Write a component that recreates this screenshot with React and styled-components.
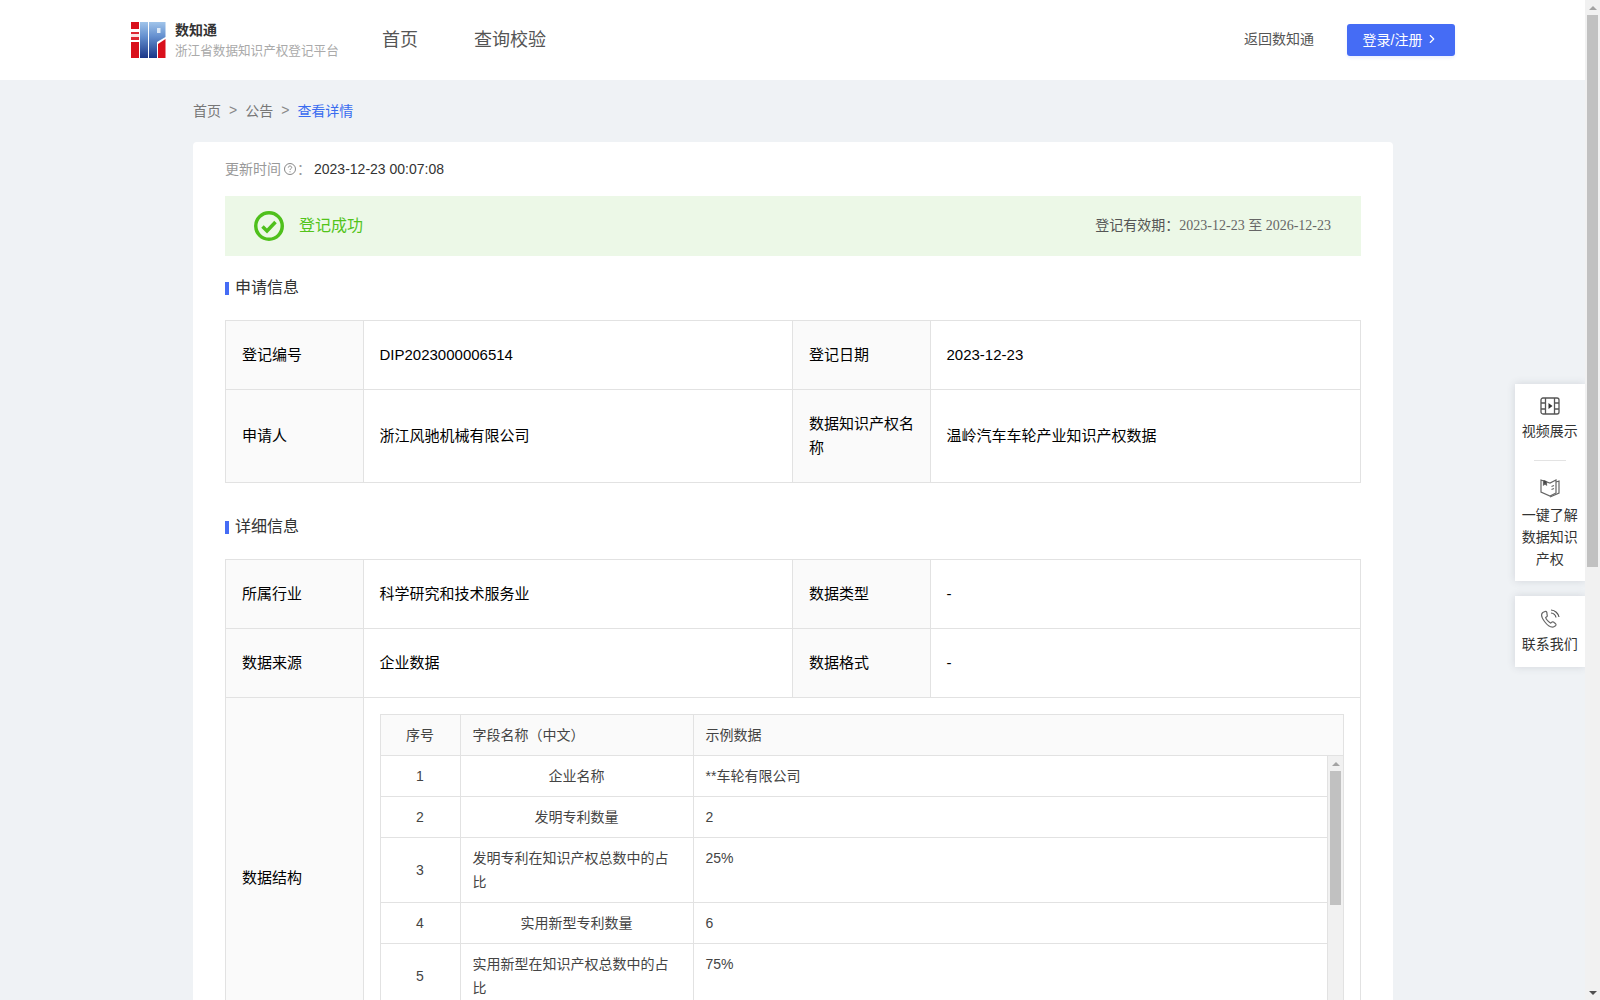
import React from 'react';
import styled, { createGlobalStyle } from 'styled-components';
import { ChevronRight } from 'lucide-react';

const FONT = '"Liberation Sans", "Noto Sans CJK SC", sans-serif';

const GlobalStyle = createGlobalStyle`
  html, body {
    margin: 0;
    height: 100%;
    overflow: hidden;
    background: #eff2f5;
    font-family: ${FONT};
  }
  * { box-sizing: border-box; }
`;

const Shell = styled.div`
  display: flex;
  height: 100vh;
  overflow: hidden;
`;

const Page = styled.div`
  flex: 1;
  min-width: 0;
  height: 100%;
  overflow: hidden;
  position: relative;
`;

const Track = styled.div`
  flex: none;
  display: flex;
  flex-direction: column;
  align-items: center;
  width: ${props => props.$width}px;
  height: ${props => props.$height || '100%'};
  background: #f1f1f1;
`;

const ArrowBox = styled.div`
  flex: none;
  height: 15px;
  width: 100%;
  display: flex;
  align-items: center;
  justify-content: center;
`;

const Arrow = styled.span`
  width: 0;
  height: 0;
  border-left: 4px solid transparent;
  border-right: 4px solid transparent;
  border-${props => (props.$down ? 'top' : 'bottom')}: 4px solid ${props => (props.$down ? '#505050' : '#a3a3a3')};
`;

const Thumb = styled.div`
  flex: none;
  width: 11px;
  height: ${props => props.$height}px;
  background: #c1c1c1;
`;

const Spacer = styled.div`
  flex: 1;
`;

const Header = styled.header`
  height: 80px;
  background: #fff;
  display: flex;
  align-items: center;
  padding: 0 130px 0 131px;
`;

const LogoWrap = styled.div`
  display: flex;
  align-items: center;
  width: 251px;
`;

const LogoText = styled.div`
  margin-left: 9px;
`;

const LogoTitle = styled.div`
  font-size: 14px;
  font-weight: 700;
  line-height: 18px;
  margin-bottom: 3px;
  color: #333;
`;

const LogoSub = styled.div`
  font-size: 12.6px;
  line-height: 18px;
  color: #aaa;
  white-space: nowrap;
`;

const Nav = styled.nav`
  display: flex;
  gap: 56px;
  padding-bottom: 4px;
`;

const NavItem = styled.a`
  font-size: 18px;
  color: #555;
`;

const HeaderRight = styled.div`
  margin-left: auto;
  display: flex;
  align-items: center;
  gap: 33px;
`;

const BackLink = styled.a`
  font-size: 14px;
  color: #555;
  margin-bottom: 4px;
`;

const LoginButton = styled.button`
  width: 108px;
  height: 32px;
  border: none;
  border-radius: 3px;
  background: #456cf5;
  color: #fff;
  font-family: ${FONT};
  font-size: 14px;
  display: flex;
  align-items: center;
  justify-content: center;
  gap: 3px;
  padding: 0 0 3px;
  box-shadow: 0 2px 3px rgba(69, 108, 245, 0.1);
`;

const Main = styled.main`
  width: 1200px;
  margin-left: 193px;
`;

const Breadcrumb = styled.div`
  height: 62px;
  display: flex;
  align-items: center;
  padding-bottom: 3px;
  font-size: 14px;
  color: #777;
`;

const CrumbSep = styled.span`
  margin: 0 8px;
  color: #888;
`;

const CrumbActive = styled.span`
  color: #3a6cf0;
`;

const Card = styled.section`
  background: #fff;
  border-radius: 4px 4px 0 0;
  padding: 0 32px 32px;
`;

const UpdateLine = styled.div`
  height: 54px;
  display: flex;
  align-items: center;
  padding-bottom: 2px;
  font-size: 14px;
  color: #999;
`;

const UpdateValue = styled.span`
  margin: 2px 0 0 3px;
  color: #333;
`;

const HelpIcon = styled.svg`
  margin: 2px 0 0 2px;
`;

const Banner = styled.div`
  height: 60px;
  background: #ecf8e7;
  display: flex;
  align-items: center;
  padding: 0 30px 0 29px;
`;

const BannerTitle = styled.span`
  margin: 0 0 4px 15px;
  font-size: 16px;
  color: #52c41a;
`;

const Validity = styled.span`
  margin: 0 0 4px auto;
  font-size: 14px;
  color: #555;
`;

const SerifDate = styled.span`
  font-family: "Liberation Serif", "Noto Sans CJK SC", serif;
  color: #666;
`;

const SectionTitle = styled.h3`
  margin: 0;
  height: ${props => props.$height}px;
  padding-top: ${props => props.$top}px;
  display: flex;
  align-items: flex-start;
  font-size: 16px;
  font-weight: 400;
  line-height: 22px;
  color: #333;
  &::before {
    content: '';
    width: 4px;
    height: 13px;
    margin: 5px 6px 0 0;
    background: #456cf5;
  }
`;

const InfoTable = styled.table`
  width: 1135px;
  border-collapse: collapse;
  table-layout: fixed;
  font-size: 15px;
  color: #000;
`;

const Label = styled.td`
  height: ${props => props.$height}px;
  padding: 0 16px;
  line-height: 24px;
  background: #fafafa;
  border: 1px solid #e2e2e2;
`;

const Value = styled.td`
  height: ${props => props.$height}px;
  padding: 0 16px 0 15.5px;
  line-height: 24px;
  background: #fff;
  border: 1px solid #e2e2e2;
`;

const StructureCell = styled.td`
  padding: 16px;
  vertical-align: top;
  border: 1px solid #e2e2e2;
`;

const StructureBox = styled.div`
  width: 964px;
  border: 1px solid #e2e2e2;
  border-bottom: none;
  font-size: 14px;
  color: #444;
`;

const GridRow = styled.div`
  display: grid;
  grid-template-columns: 80px 233px 1fr;
  background: ${props => (props.$head ? '#fafafa' : '#fff')};
  border-bottom: 1px solid #e2e2e2;
`;

const GridCell = styled.div`
  min-height: ${props => props.$height}px;
  padding: ${props => (props.$top ? '8px 12px 8px 11.5px' : '0 12.5px 0 11.5px')};
  display: flex;
  align-items: ${props => (props.$top ? 'flex-start' : 'center')};
  justify-content: ${props => (props.$center ? 'center' : 'flex-start')};
  text-align: ${props => (props.$center ? 'center' : 'left')};
  line-height: 24px;
  border-right: ${props => (props.$last ? 'none' : '1px solid #e2e2e2')};
`;

const StructureBody = styled.div`
  display: flex;
  align-items: flex-start;
`;

const RowsColumn = styled.div`
  flex: 1;
  min-width: 0;
`;

const InnerTrack = styled(Track)`
  border-left: 1px solid #e2e2e2;
  height: 260px;
`;

const SideDock = styled.aside`
  position: absolute;
  top: 384px;
  right: 0;
  width: 70px;
  display: flex;
  flex-direction: column;
  gap: 15px;
`;

const DockPanel = styled.div`
  background: #fff;
  box-shadow: 0 0 8px rgba(60, 70, 90, 0.16);
  padding: ${props => props.$padding};
  display: flex;
  flex-direction: column;
  align-items: center;
`;

const DockItem = styled.div`
  width: 100%;
  display: flex;
  flex-direction: column;
  align-items: center;
  text-align: center;
  font-size: 14px;
  line-height: 22px;
  color: #333;
  padding: 0 7px 0 6.5px;
`;

const DockIcon = styled.svg`
  display: block;
  margin-bottom: ${props => props.$gap}px;
`;

const DockDivider = styled.div`
  width: 32px;
  height: 1px;
  background: #e3e3e3;
  margin: ${props => props.$margin};
`;

const LogoMark = () => (
  <svg width="35" height="36" viewBox="0 0 35 36">
    <defs>
      <linearGradient id="logoBlue" x1="0" y1="0" x2="0" y2="1">
        <stop offset="0" stopColor="#a0c4ea" />
        <stop offset="0.4" stopColor="#6590cf" />
        <stop offset="1" stopColor="#1a3688" />
      </linearGradient>
    </defs>
    <rect x="0" y="0" width="8" height="7" fill="#d9101c" />
    <rect x="0" y="10" width="8" height="8" fill="#d9101c" opacity="0.9" />
    <rect x="0" y="12" width="8" height="3" fill="#fbe4e4" />
    <rect x="0" y="20" width="8" height="16" fill="#d9101c" />
    <rect x="9" y="0" width="8" height="36" fill="url(#logoBlue)" />
    <path d="M18 0H34.500V15L26 20v16h-8z" fill="url(#logoBlue)" />
    <rect x="26" y="6" width="3.500" height="5" fill="#dce9f7" />
    <path d="M27 22l7.500-5v19H27z" fill="#d9101c" />
  </svg>
);

const SuccessIcon = () => (
  <svg width="30" height="30" viewBox="0 0 30 30">
    <circle cx="15" cy="15" r="13.250" fill="none" stroke="#4fc01c" strokeWidth="3.500" />
    <path d="M8.500 15.500l4.500 4.500L21.500 11" fill="none" stroke="#4fc01c" strokeWidth="3.500" />
  </svg>
);

const VideoIcon = () => (
  <DockIcon $gap={5} width="20" height="18" viewBox="0 0 20 18" fill="none" stroke="#555" strokeWidth="1.300">
    <rect x="1" y="1" width="18" height="16" rx="2" />
    <path d="M5.500 1v16M14.500 1v16M1 6h4.500M1 12h4.500M14.500 6H19M14.500 12H19" />
    <path d="M8.500 6l4 3-4 3z" fill="#333" stroke="none" />
  </DockIcon>
);

const BookIcon = () => (
  <DockIcon $gap={6} width="20" height="20" viewBox="0 0 20 20" fill="none" stroke="#666" strokeWidth="1.200">
    <path d="M1 2l9 3 6-3v13l-6 3-9-4z" />
    <path d="M16 4l3-1v12l-9 4" />
    <path d="M3.500 2v5l1.500-1 1.500 1V3" fill="#444" />
    <path d="M11.500 8.500l2.500-1M11.500 11.500l2.500-1" />
  </DockIcon>
);

const PhoneIcon = () => (
  <DockIcon $gap={4} width="20" height="20" viewBox="0 0 20 20" fill="none" stroke="#666" strokeWidth="1.200">
    <path d="M5 2.500L2.800 3.500C1 5 1.500 8.500 4.500 12.500c3 4 6.500 6 9 5.500l2-1.300c.8-.8.500-1.700-.2-2.300l-1.800-1.300c-.8-.5-1.500-.3-2 .2l-.8.8c-1.500-.4-4.500-3.500-5-5.500l1-.8c.6-.5.700-1.200.4-2L6.800 3.200C6.500 2.500 5.800 2.200 5 2.500z" />
    <path d="M11 4c2.500.2 4.500 2 5 4.500" stroke="#555" />
    <path d="M11 1c4 .2 7.300 3.300 8 7" stroke="#555" />
  </DockIcon>
);

const rows = [
  { no: '1', name: '企业名称', sample: '**车轮有限公司', h: 40 },
  { no: '2', name: '发明专利数量', sample: '2', h: 40 },
  { no: '3', name: '发明专利在知识产权总数中的占比', sample: '25%', h: 64, top: true },
  { no: '4', name: '实用新型专利数量', sample: '6', h: 40 },
  { no: '5', name: '实用新型在知识产权总数中的占比', sample: '75%', h: 64, top: true },
];

const Columns = () => (
  <colgroup>
    <col width="138" />
    <col width="429" />
    <col width="138" />
    <col width="430" />
  </colgroup>
);

const App = () => (
  <Shell>
    <GlobalStyle />
    <Page>
      <Header>
        <LogoWrap>
          <LogoMark />
          <LogoText>
            <LogoTitle>数知通</LogoTitle>
            <LogoSub>浙江省数据知识产权登记平台</LogoSub>
          </LogoText>
        </LogoWrap>
        <Nav>
          <NavItem>首页</NavItem>
          <NavItem>查询校验</NavItem>
        </Nav>
        <HeaderRight>
          <BackLink>返回数知通</BackLink>
          <LoginButton>
            登录/注册
            <ChevronRight size={14} strokeWidth={2} />
          </LoginButton>
        </HeaderRight>
      </Header>

      <Main>
        <Breadcrumb>
          首页<CrumbSep>&gt;</CrumbSep>公告<CrumbSep>&gt;</CrumbSep>
          <CrumbActive>查看详情</CrumbActive>
        </Breadcrumb>
        <Card>
          <UpdateLine>
            更新时间
            <HelpIcon width="14" height="14" viewBox="0 0 14 14" fill="none" stroke="#888">
              <circle cx="7" cy="7" r="5.500" />
              <path d="M5.300 5.600c0-1 .8-1.600 1.700-1.600s1.700.6 1.700 1.500c0 1.200-1.700 1.300-1.700 2.500M7 9.300v1" />
            </HelpIcon>
            ：<UpdateValue>2023-12-23 00:07:08</UpdateValue>
          </UpdateLine>
          <Banner>
            <SuccessIcon />
            <BannerTitle>登记成功</BannerTitle>
            <Validity>
              登记有效期：<SerifDate>2023-12-23 至 2026-12-23</SerifDate>
            </Validity>
          </Banner>

          <SectionTitle $height={64} $top={21}>申请信息</SectionTitle>
          <InfoTable>
            <Columns />
            <tbody>
              <tr>
                <Label $height={69}>登记编号</Label>
                <Value $height={69}>DIP2023000006514</Value>
                <Label $height={69}>登记日期</Label>
                <Value $height={69}>2023-12-23</Value>
              </tr>
              <tr>
                <Label $height={93}>申请人</Label>
                <Value $height={93}>浙江风驰机械有限公司</Value>
                <Label $height={93}>数据知识产权名称</Label>
                <Value $height={93}>温岭汽车车轮产业知识产权数据</Value>
              </tr>
            </tbody>
          </InfoTable>

          <SectionTitle $height={76} $top={33}>详细信息</SectionTitle>
          <InfoTable>
            <Columns />
            <tbody>
              <tr>
                <Label $height={69}>所属行业</Label>
                <Value $height={69}>科学研究和技术服务业</Value>
                <Label $height={69}>数据类型</Label>
                <Value $height={69}>-</Value>
              </tr>
              <tr>
                <Label $height={69}>数据来源</Label>
                <Value $height={69}>企业数据</Value>
                <Label $height={69}>数据格式</Label>
                <Value $height={69}>-</Value>
              </tr>
              <tr>
                <Label $height={360}>数据结构</Label>
                <StructureCell colSpan={3}>
                  <StructureBox>
                    <GridRow $head>
                      <GridCell $height={40} $center>序号</GridCell>
                      <GridCell $height={40}>字段名称（中文）</GridCell>
                      <GridCell $height={40} $last>示例数据</GridCell>
                    </GridRow>
                    <StructureBody>
                      <RowsColumn>
                        {rows.map(row => (
                          <GridRow key={row.no}>
                            <GridCell $height={row.h} $center>{row.no}</GridCell>
                            <GridCell $height={row.h} $center={!row.top}>{row.name}</GridCell>
                            <GridCell $height={row.h} $top={row.top} $last>{row.sample}</GridCell>
                          </GridRow>
                        ))}
                      </RowsColumn>
                      <InnerTrack $width={16}>
                        <ArrowBox><Arrow /></ArrowBox>
                        <Thumb $height={134} />
                      </InnerTrack>
                    </StructureBody>
                  </StructureBox>
                </StructureCell>
              </tr>
            </tbody>
          </InfoTable>
        </Card>
      </Main>

      <SideDock>
        <DockPanel $padding="13px 0 11px">
          <DockItem>
            <VideoIcon />
            视频展示
          </DockItem>
          <DockDivider $margin="18px 0 17px" />
          <DockItem>
            <BookIcon />
            一键了解数据知识产权
          </DockItem>
        </DockPanel>
        <DockPanel $padding="13px 0 12px">
          <DockItem>
            <PhoneIcon />
            联系我们
          </DockItem>
        </DockPanel>
      </SideDock>
    </Page>
    <Track $width={15}>
      <ArrowBox><Arrow /></ArrowBox>
      <Thumb $height={552} />
      <Spacer />
      <ArrowBox><Arrow $down /></ArrowBox>
    </Track>
  </Shell>
);

export default App;
